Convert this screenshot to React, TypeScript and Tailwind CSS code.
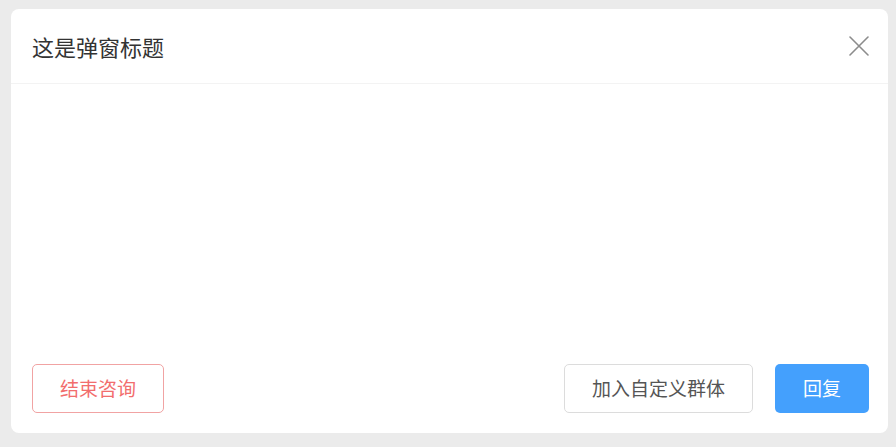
export default function App() {
  return (
    <div
      className="w-[896px] h-[447px] bg-[#ebebeb] pl-[11px] pt-[9px]"
      style={{ fontFamily: '"Noto Sans CJK SC", "Noto Sans", sans-serif' }}
    >
      <div className="w-[877px] h-[424px] bg-white rounded-[8px] flex flex-col">
        {/* 标题栏 */}
        <div className="h-[75px] flex items-center justify-between pl-[21px] pr-[19px] border-b border-[#f3f3f3]">
          <h1 className="text-[22px] text-[#333] leading-none">这是弹窗标题</h1>
          <button className="w-[20px] h-[20px] flex items-center justify-center">
            <svg width="20" height="20" viewBox="0 0 20 20" fill="none" stroke="#8c8c8c" strokeWidth="1.6" strokeLinecap="round">
              <path d="M1 1 L19 19 M19 1 L1 19" />
            </svg>
          </button>
        </div>

        <div className="flex-1" />

        {/* 底部按钮 */}
        <div className="flex items-center justify-between pl-[21px] pr-[19px] pb-[20px]">
          <button className="w-[132px] h-[49px] rounded-[5px] border border-[#f1a3a3] text-[#f26d6d] text-[19px] bg-white">
            结束咨询
          </button>
          <div className="flex gap-[22px]">
            <button className="w-[189px] h-[49px] rounded-[5px] border border-[#dcdcdc] text-[#555] text-[19px] bg-white">
              加入自定义群体
            </button>
            <button className="w-[94px] h-[49px] rounded-[5px] bg-[#44a0fd] text-white text-[19px]">
              回复
            </button>
          </div>
        </div>
      </div>
    </div>
  )
}
